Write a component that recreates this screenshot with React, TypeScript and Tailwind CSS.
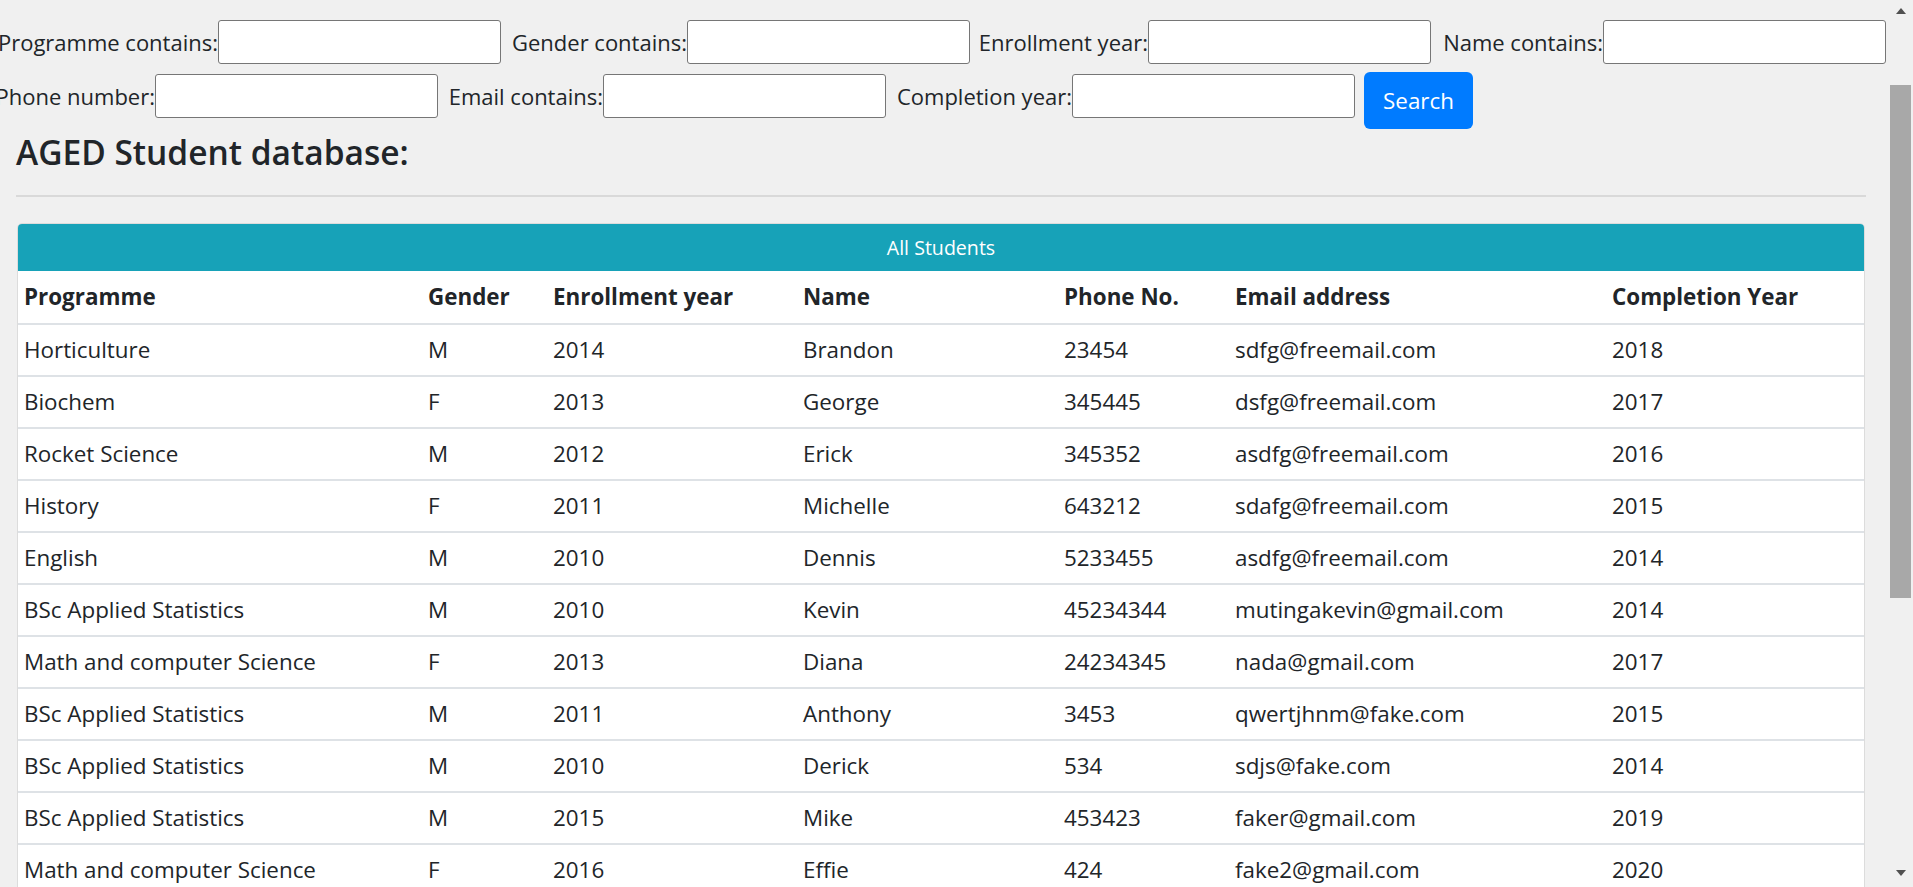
type Student = {
  programme: string;
  gender: string;
  enrolled: string;
  name: string;
  phone: string;
  email: string;
  completed: string;
}

const students: Student[] = [
  { programme: "Horticulture", gender: "M", enrolled: "2014", name: "Brandon", phone: "23454", email: "sdfg@freemail.com", completed: "2018" },
  { programme: "Biochem", gender: "F", enrolled: "2013", name: "George", phone: "345445", email: "dsfg@freemail.com", completed: "2017" },
  { programme: "Rocket Science", gender: "M", enrolled: "2012", name: "Erick", phone: "345352", email: "asdfg@freemail.com", completed: "2016" },
  { programme: "History", gender: "F", enrolled: "2011", name: "Michelle", phone: "643212", email: "sdafg@freemail.com", completed: "2015" },
  { programme: "English", gender: "M", enrolled: "2010", name: "Dennis", phone: "5233455", email: "asdfg@freemail.com", completed: "2014" },
  { programme: "BSc Applied Statistics", gender: "M", enrolled: "2010", name: "Kevin", phone: "45234344", email: "mutingakevin@gmail.com", completed: "2014" },
  { programme: "Math and computer Science", gender: "F", enrolled: "2013", name: "Diana", phone: "24234345", email: "nada@gmail.com", completed: "2017" },
  { programme: "BSc Applied Statistics", gender: "M", enrolled: "2011", name: "Anthony", phone: "3453", email: "qwertjhnm@fake.com", completed: "2015" },
  { programme: "BSc Applied Statistics", gender: "M", enrolled: "2010", name: "Derick", phone: "534", email: "sdjs@fake.com", completed: "2014" },
  { programme: "BSc Applied Statistics", gender: "M", enrolled: "2015", name: "Mike", phone: "453423", email: "faker@gmail.com", completed: "2019" },
  { programme: "Math and computer Science", gender: "F", enrolled: "2016", name: "Effie", phone: "424", email: "fake2@gmail.com", completed: "2020" },
  { programme: "Horticulture", gender: "F", enrolled: "2017", name: "Grace", phone: "78451", email: "grace@freemail.com", completed: "2021" },
];

const cols = "grid grid-cols-[404px_125px_250px_261px_171px_377px_1fr] items-center";

const Field = ({ label, labelWidth, gap }: { label: string; labelWidth: string; gap: string }) => (
  <>
    <label className={`${labelWidth} ${gap} shrink-0 flex justify-end whitespace-nowrap`}>{label}</label>
    <input type="text" className="w-[283px] h-[44px] shrink-0 bg-white border border-[#767676] rounded-[3px] px-1 focus:outline-none" />
  </>
);

const Scrollbar = () => (
  <div className="w-[25px] shrink-0 flex flex-col items-center bg-[#f0f0f0]">
    <svg width="10" height="6" viewBox="0 0 10 6" className="mt-[8px]"><polygon points="5,0 10,6 0,6" fill="#505050" /></svg>
    <div className="mt-[71px] w-[21px] h-[513px] bg-[#a8a8a8]" />
    <svg width="10" height="6" viewBox="0 0 10 6" className="mt-[272px]"><polygon points="0,0 10,0 5,6" fill="#505050" /></svg>
  </div>
);

const App = () => {
  return (
    <div className="flex w-[1913px] h-[887px] overflow-hidden bg-[#f0f0f0] text-[#212529] font-['Open_Sans',sans-serif]">
      <div className="flex-1 min-w-0">
        <form className="text-[22px] -ml-[3px]" onSubmit={(e) => e.preventDefault()}>
          <div className="flex items-center h-[44px] mt-[20px]">
            <Field label="Programme contains:" labelWidth="w-[221px]" gap="" />
            <Field label="Gender contains:" labelWidth="w-[178px]" gap="ml-[8px]" />
            <Field label="Enrollment year:" labelWidth="w-[171px]" gap="ml-[7px]" />
            <Field label="Name contains:" labelWidth="w-[163px]" gap="ml-[9px]" />
          </div>
          <div className="flex items-center h-[44px] mt-[10px]">
            <Field label="Phone number:" labelWidth="w-[158px]" gap="" />
            <Field label="Email contains:" labelWidth="w-[156px]" gap="ml-[9px]" />
            <Field label="Completion year:" labelWidth="w-[179px]" gap="ml-[7px]" />
            <button type="submit" className="ml-[9px] mt-[9px] w-[109px] h-[57px] shrink-0 bg-[#007bff] text-white text-[22.4px] rounded-[6px]">Search</button>
          </div>
        </form>

        <h4 className="ml-[16px] mt-[14px] h-[40px] leading-[40px] text-[33.5px] font-semibold">AGED Student database:</h4>
        <hr className="ml-[16px] w-[1850px] mt-[23px] h-[2px] border-0 bg-[#d9d9d9]" />

        <div className="ml-[17px] w-[1848px] mt-[26px] bg-white border border-[#dcdcdc] rounded-[5px]">
          <div className="h-[47px] bg-[#17a2b8] rounded-t-[4px] flex items-center justify-center text-white text-[19.6px]">All Students</div>
          <div className="text-[22.4px]">
            <div className={`${cols} h-[52px] font-bold`}>
              <div className="pl-[6px]">Programme</div>
              <div className="pl-[6px]">Gender</div>
              <div className="pl-[6px]">Enrollment year</div>
              <div className="pl-[6px]">Name</div>
              <div className="pl-[6px]">Phone No.</div>
              <div className="pl-[6px]">Email address</div>
              <div className="pl-[6px]">Completion Year</div>
            </div>
            {students.map((s, i) => (
              <div key={i} className={`${cols} h-[52px] border-t-2 border-[#dee2e6]`}>
                <div className="pl-[6px] whitespace-nowrap">{s.programme}</div>
                <div className="pl-[6px]">{s.gender}</div>
                <div className="pl-[6px]">{s.enrolled}</div>
                <div className="pl-[6px]">{s.name}</div>
                <div className="pl-[6px]">{s.phone}</div>
                <div className="pl-[6px]">{s.email}</div>
                <div className="pl-[6px]">{s.completed}</div>
              </div>
            ))}
          </div>
        </div>
      </div>
      <Scrollbar />
    </div>
  );
}

export default App;
